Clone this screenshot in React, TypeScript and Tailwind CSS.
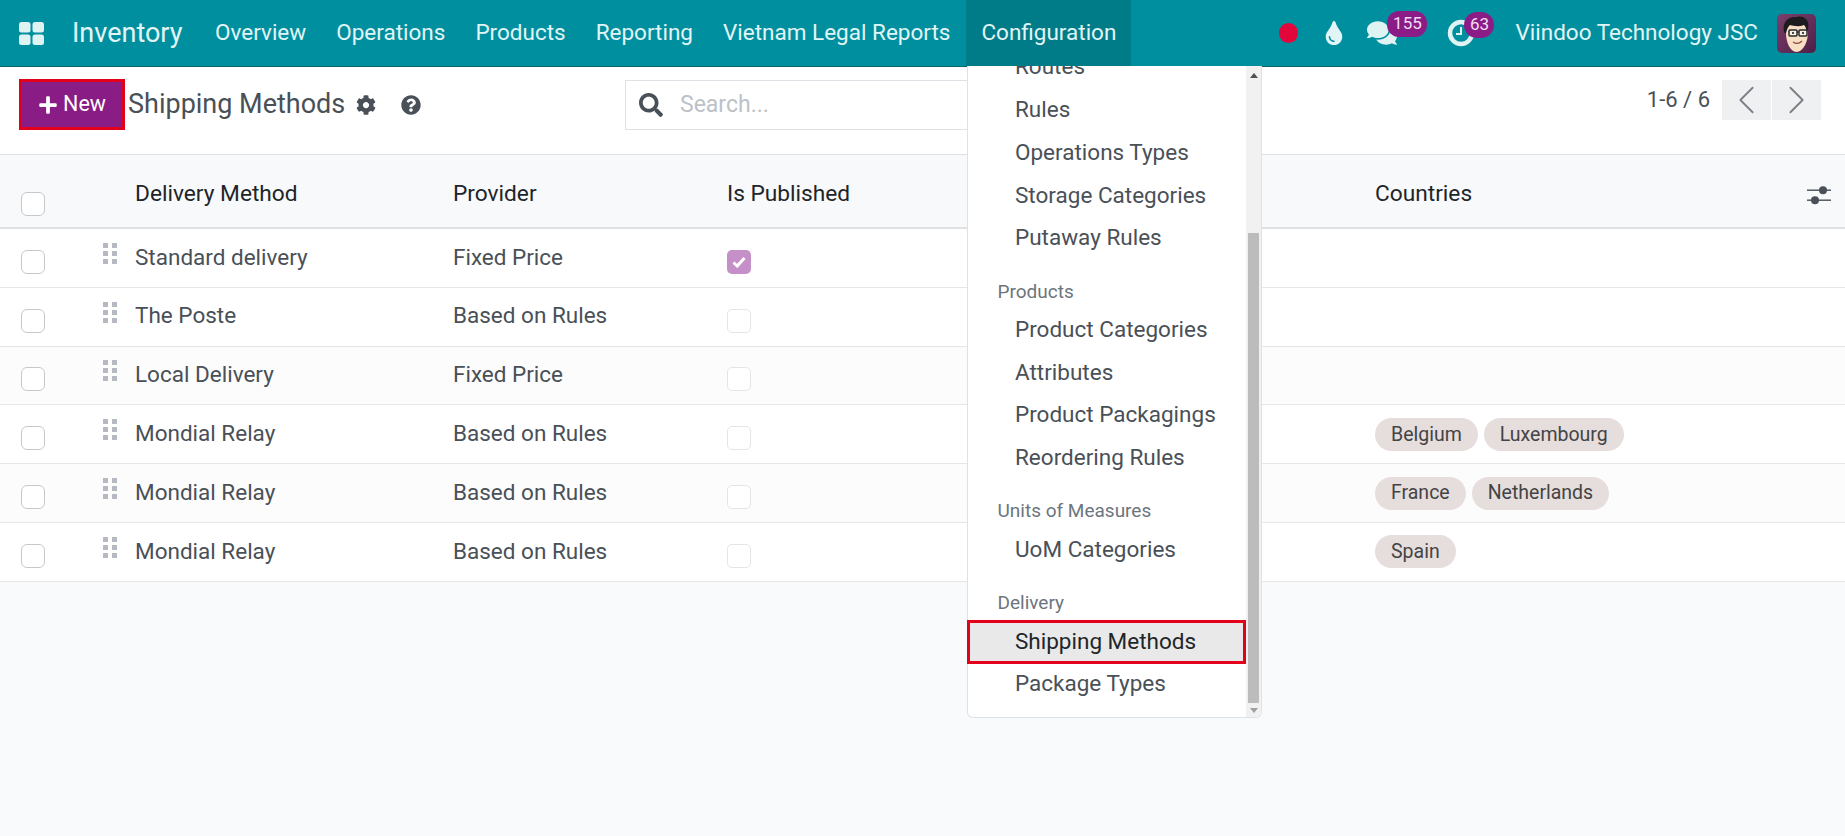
import React from "react";
import { FaCog, FaQuestionCircle, FaSearch, FaPlus, FaTint, FaComments } from "react-icons/fa";
import { ChevronLeft, ChevronRight } from "lucide-react";

const navItems = ["Overview", "Operations", "Products", "Reporting", "Vietnam Legal Reports"];

type Row = { name: string; provider: string; published?: boolean; tags: string[] };
const rows: Row[] = [
  { name: "Standard delivery", provider: "Fixed Price", published: true, tags: [] },
  { name: "The Poste", provider: "Based on Rules", tags: [] },
  { name: "Local Delivery", provider: "Fixed Price", tags: [] },
  { name: "Mondial Relay", provider: "Based on Rules", tags: ["Belgium", "Luxembourg"] },
  { name: "Mondial Relay", provider: "Based on Rules", tags: ["France", "Netherlands"] },
  { name: "Mondial Relay", provider: "Based on Rules", tags: ["Spain"] },
];

function AppsIcon() {
  return (
    <svg width="25" height="23" viewBox="0 0 25 23" fill="#dff3f3">
      <rect x="0" y="0" width="11.5" height="10.5" rx="2.5" />
      <rect x="13.5" y="0" width="11.5" height="10.5" rx="2.5" />
      <rect x="0" y="12.5" width="11.5" height="10.5" rx="2.5" />
      <rect x="13.5" y="12.5" width="11.5" height="10.5" rx="2.5" />
    </svg>
  );
}

function DragHandle() {
  return (
    <svg width="14" height="22" viewBox="0 0 14 22" fill="#b4b9c2">
      <rect x="0" y="0" width="5" height="5" />
      <rect x="9" y="0" width="5" height="5" />
      <rect x="0" y="8" width="5" height="5" />
      <rect x="9" y="8" width="5" height="5" />
      <rect x="0" y="16" width="5" height="5" />
      <rect x="9" y="16" width="5" height="5" />
    </svg>
  );
}

function Avatar() {
  return (
    <svg width="39" height="39" viewBox="0 0 39 39" className="rounded-[5px]">
      <defs>
        <linearGradient id="avbg" x1="0" y1="0" x2="1" y2="1">
          <stop offset="0" stopColor="#7a3f6c" />
          <stop offset="1" stopColor="#4e1f47" />
        </linearGradient>
      </defs>
      <rect width="39" height="39" fill="url(#avbg)" />
      <path d="M9 19c0-8 5-12 11-12s11 4 11 11c0 10-5 20-11.500 20S9 28 9 19z" fill="#f8dfc4" />
      <path d="M7 18C5 8 11 2 20 3c4-1 7 0 9 2 3 3 3 9 1 14-1-4-1-6-3-8-5 2-10 1-14 0-2 2-3 4-4 8-1 0-2 0-2-1z" fill="#1d1b1e" />
      <rect x="12" y="16" width="8" height="6" rx="1" fill="#f6efe6" stroke="#2a2a2a" strokeWidth="1.5" />
      <rect x="22" y="16" width="8" height="6" rx="1" fill="#f6efe6" stroke="#2a2a2a" strokeWidth="1.5" />
      <path d="M20 18h2" stroke="#2a2a2a" strokeWidth="1.5" />
      <circle cx="16" cy="19" r="1.100" fill="#222" />
      <circle cx="26" cy="19" r="1.100" fill="#222" />
      <path d="M16 28c3 2 6 2 9-1" fill="none" stroke="#8a4a3a" strokeWidth="1.200" />
    </svg>
  );
}

function ClockIcon() {
  return (
    <svg width="28" height="28" viewBox="0 0 28 28" fill="none" stroke="#dff3f3">
      <circle cx="14" cy="14" r="11" strokeWidth="4.5" />
      <path d="M14 8v7h-5" strokeWidth="2" />
    </svg>
  );
}

function SlidersIcon() {
  return (
    <svg width="24" height="20" viewBox="0 0 24 20" fill="#495057">
      <rect x="0" y="4.500" width="24" height="1.400" />
      <rect x="0" y="14.500" width="24" height="1.400" />
      <circle cx="16" cy="5.200" r="4" />
      <circle cx="8" cy="15.200" r="4" />
    </svg>
  );
}

function Checkbox({ className = "" }: { className?: string }) {
  return <span className={`block w-6 h-6 rounded-[6px] border border-[#c6c9cc] bg-white ${className}`} />;
}

function PublishedBox({ on }: { on?: boolean }) {
  if (on) {
    return (
      <span className="flex w-6 h-6 mt-[8px] rounded-[5px] bg-[#c58fc7] items-center justify-center">
        <svg width="14" height="12" viewBox="0 0 14 12" fill="none" stroke="#fff" strokeWidth="3">
          <path d="M1.500 6.500l3.700 3.500L12.500 2" />
        </svg>
      </span>
    );
  }
  return <span className="block w-6 h-6 mt-[8px] rounded-[5px] border border-[#e3e5e7] bg-white" />;
}

const menuHead = "h-[33px] pl-[29.5px] flex items-center text-[19px] text-[#6c757d]";
const menuItem = "h-[42.7px] pl-[47px] flex items-center text-[22.5px] text-[#495057] shrink-0";

function MenuGroup({ title, items }: { title?: string; items: string[] }) {
  return (
    <div className="mb-[16px]">
      {title && <div className={menuHead}>{title}</div>}
      {items.map((i) => (
        <div key={i} className={menuItem}>{i}</div>
      ))}
    </div>
  );
}

function ConfigMenu() {
  return (
    <div className="absolute left-[967px] top-[66px] w-[295px] h-[652px] flex bg-white border border-t-0 border-[#dee2e6] rounded-b-[6px] z-10">
      <div className="flex-1 overflow-x-visible overflow-y-clip">
        <div className="-mt-[20px]">
          <MenuGroup items={["Routes", "Rules", "Operations Types", "Storage Categories", "Putaway Rules"]} />
          <MenuGroup title="Products" items={["Product Categories", "Attributes", "Product Packagings", "Reordering Rules"]} />
          <MenuGroup title="Units of Measures" items={["UoM Categories"]} />
          <div className={menuHead}>Delivery</div>
          <div className="h-[44px] -ml-[1px] pl-[48px] flex items-center text-[22.5px] text-[#212529] bg-[#e9e9e9] outline outline-[3px] -outline-offset-[3px] outline-[#e2001a]">
            Shipping Methods
          </div>
          <div className={`${menuItem} -mt-[1.5px]`}>Package Types</div>
        </div>
      </div>
      <div className="w-[15px] shrink-0 bg-[#f1f1f1] flex flex-col items-center rounded-br-[6px]">
        <svg width="8" height="5" viewBox="0 0 8 5" fill="#505050" className="mt-[7px]"><path d="M4 0l4 5H0z" /></svg>
        <div className="w-[11px] h-[470px] mt-[155px] bg-[#bcbcbc]" />
        <svg width="8" height="5" viewBox="0 0 8 5" fill="#a0a0a0" className="mt-[5px]"><path d="M4 5L0 0h8z" /></svg>
      </div>
    </div>
  );
}

export default function App() {
  return (
    <div className="relative w-[1845px] h-[836px] overflow-hidden bg-[#f9fafb] font-['Roboto',sans-serif] text-[#495057]">
      {/* navbar */}
      <header className="h-[67px] flex items-stretch bg-[#008f9e] border-b border-[#01666e] text-[#e2f5f6]">
        <div className="flex items-center pl-[19px] w-[72px] shrink-0"><AppsIcon /></div>
        <div className="flex items-center text-[27px] w-[128px] shrink-0">Inventory</div>
        {navItems.map((n) => (
          <div key={n} className="flex items-center px-[15px] text-[22.5px] whitespace-nowrap">{n}</div>
        ))}
        <div className="ml-[1px] flex items-center px-[15px] text-[22.5px] bg-[#007c89] w-[165px] shrink-0">Configuration</div>
        <div className="flex-1 flex items-center">
          <span className="ml-[148px] w-[19px] h-[20px] rounded-full bg-[#e2063a] shrink-0" />
          <FaTint className="ml-[24px] text-[24px] shrink-0" />
          <span className="relative ml-[21px] w-[31px] shrink-0">
            <FaComments className="text-[30px] text-[#dff3f3]" />
            <span className="absolute left-[20px] -top-[7px] w-[40px] h-[26px] rounded-[12px] bg-[#8b1c87] flex items-center justify-center text-[17px] text-[#f3dff3]">155</span>
          </span>
          <span className="relative ml-[49px] w-[28px] shrink-0">
            <ClockIcon />
            <span className="absolute left-[17px] -top-[7px] w-[30px] h-[26px] rounded-[13px] bg-[#8b1c87] flex items-center justify-center text-[17px] text-[#f3dff3]">63</span>
          </span>
          <span className="ml-[40px] text-[22.5px] whitespace-nowrap shrink-0">Viindoo Technology JSC</span>
          <span className="ml-[19px] flex shrink-0"><Avatar /></span>
        </div>
      </header>

      {/* control panel */}
      <div className="h-[88px] bg-white border-b border-[#dee2e6] flex items-start">
        <button className="ml-[19px] mt-[12px] w-[106px] h-[51px] bg-[#8a1c85] border-[3px] border-[#e2001a] text-white text-[21.5px] flex items-center justify-center gap-[5px]">
          <FaPlus className="text-[20px]" />
          New
        </button>
        <div className="ml-[3px] mt-[12px] h-[50px] flex items-center text-[27px] text-[#495057] w-[228px] whitespace-nowrap">Shipping Methods</div>
        <FaCog className="mt-[28px] text-[20px] text-[#495057]" />
        <FaQuestionCircle className="ml-[25px] mt-[28px] text-[20px] text-[#495057]" />
        <div className="ml-[204px] mt-[13px] w-[516px] h-[50px] border border-[#dee2e6] flex items-center text-[23px]">
          <FaSearch className="ml-[13px] text-[24px] text-[#495057]" />
          <span className="ml-[17px] text-[#bcc2c8]">Search...</span>
        </div>
        <div className="flex-1 flex justify-end items-start pr-[24px] pt-[13px]">
          <span className="text-[22px] h-[40px] flex items-center mr-[12px] -mt-[1px]">1-6 / 6</span>
          <span className="flex gap-[1px]">
            <span className="w-[49px] h-[40px] bg-[#eff0f1] flex items-center justify-center"><ChevronLeft size={52} strokeWidth={0.9} className="text-[#7a7f85]" /></span>
            <span className="w-[49px] h-[40px] bg-[#eff0f1] flex items-center justify-center"><ChevronRight size={52} strokeWidth={0.9} className="text-[#7a7f85]" /></span>
          </span>
        </div>
      </div>

      {/* table */}
      <div className="grid grid-cols-[135px_318px_274px_648px_1fr] h-[74px] bg-[#f8f9fa] border-b-2 border-[#dfe1e3] items-center text-[22.7px] text-[#212529]">
        <div className="pl-[21px]"><Checkbox className="mt-[25px]" /></div>
        <div className="mt-[7px]">Delivery Method</div>
        <div className="mt-[7px]">Provider</div>
        <div className="mt-[7px]">Is Published</div>
        <div className="flex items-center justify-between pr-[14px] mt-[7px]">
          <span>Countries</span>
          <span className="flex mt-[2px]"><SlidersIcon /></span>
        </div>
      </div>
      {rows.map((r, idx) => (
        <div
          key={idx}
          className={`grid grid-cols-[135px_318px_274px_648px_1fr] h-[58.8px] border-b border-[#e4e6e8] items-center text-[22.5px] ${idx % 2 === 0 && idx > 0 ? "bg-[#fcfcfc]" : "bg-white"}`}
        >
          <div className="pl-[21px] flex items-start">
            <Checkbox className="mt-[8px]" />
            <span className="ml-[58px] mt-[1px] flex"><DragHandle /></span>
          </div>
          <div className="-mt-[1px]">{r.name}</div>
          <div className="-mt-[1px]">{r.provider}</div>
          <div><PublishedBox on={r.published} /></div>
          <div className="flex gap-[6px]">
            {r.tags.map((t) => (
              <span key={t} className="h-[33px] px-[16px] rounded-full bg-[#e6dddd] flex items-center text-[19.5px] text-[#444444]">{t}</span>
            ))}
          </div>
        </div>
      ))}

      <ConfigMenu />
    </div>
  );
}
